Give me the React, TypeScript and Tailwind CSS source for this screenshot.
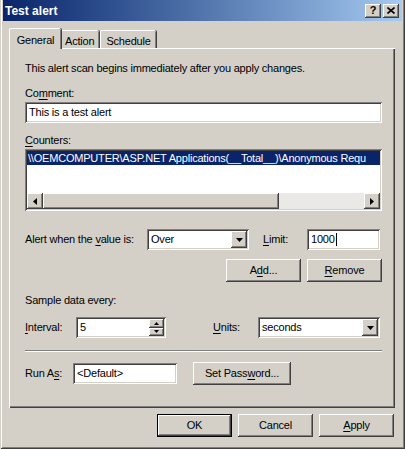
import React from "react";

const RAISED =
  "shadow-[inset_-1px_-1px_#404040,inset_1px_1px_#ffffff,inset_-2px_-2px_#808080,inset_2px_2px_#d4d0c8]";
const SUNKEN =
  "shadow-[inset_1px_1px_#808080,inset_-1px_-1px_#ffffff,inset_2px_2px_#404040,inset_-2px_-2px_#d4d0c8]";

function U({ children }: { children: React.ReactNode }) {
  return <span className="underline underline-offset-[2px]">{children}</span>;
}

function Btn({
  children,
  className = "",
  isDefault = false,
}: {
  children: React.ReactNode;
  className?: string;
  isDefault?: boolean;
}) {
  if (isDefault) {
    return (
      <div className={`flex h-[23px] border border-black ${className}`}>
        <div className={`flex flex-1 items-center justify-center bg-[#d4d0c8] ${RAISED}`}>{children}</div>
      </div>
    );
  }
  return (
    <div className={`flex h-[23px] items-center justify-center bg-[#d4d0c8] ${RAISED} ${className}`}>
      {children}
    </div>
  );
}

function DownArrow() {
  return (
    <svg width="7" height="4" viewBox="0 0 7 4">
      <path d="M0 0h7L3.5 4z" fill="#000" />
    </svg>
  );
}

function Select({ value, className = "" }: { value: string; className?: string }) {
  return (
    <div className={`flex h-[21px] items-center bg-white p-[2px] ${SUNKEN} ${className}`}>
      <span className="flex-1 pl-[2px] leading-[13px]">{value}</span>
      <div className={`flex h-[17px] w-[16px] items-center justify-center bg-[#d4d0c8] ${RAISED}`}>
        <DownArrow />
      </div>
    </div>
  );
}

function TextBox({ value, className = "", cursor = false }: { value: string; className?: string; cursor?: boolean }) {
  return (
    <div className={`flex h-[21px] items-center bg-white px-[4px] ${SUNKEN} ${className}`}>
      <span className="leading-[13px]">{value}</span>
      {cursor && <span className="ml-[1px] h-[13px] w-[1px] bg-black" />}
    </div>
  );
}

function Tab({ label, active = false }: { label: string; active?: boolean }) {
  if (active) {
    return (
      <div className="relative z-10 -mr-[2px] flex h-[21px] w-[52px] items-start justify-center rounded-t-[2px] border-l border-t border-white bg-[#d4d0c8] pt-[3px] shadow-[inset_-1px_0_#808080,1px_0_#404040]">
        {label}
      </div>
    );
  }
  return (
    <div className="mt-[2px] flex h-[18px] items-start justify-center rounded-t-[2px] border-l border-t border-white bg-[#d4d0c8] px-[5px] pt-[2px] shadow-[inset_-1px_0_#808080,1px_0_#404040]">
      {label}
    </div>
  );
}

export default function App() {
  return (
    <div className="flex h-[449px] w-[405px] flex-col bg-[#d4d0c8] px-[3px] pb-[3px] font-['Liberation_Sans',Arial,sans-serif] text-[11px] tracking-[-0.2px] text-black shadow-[inset_1px_0_#d4d0c8,inset_-1px_-1px_#404040,inset_2px_0_#ffffff,inset_-2px_-2px_#808080]">
      {/* title bar */}
      <div className="flex h-[21px] items-center justify-between bg-gradient-to-r from-[#0a246a] to-[#a6caf0] pl-[2px] pr-[3px]">
        <span className="text-[12px] font-bold tracking-normal text-white">Test alert</span>
        <div className="flex items-center gap-[2px]">
          <div className={`flex h-[14px] w-[16px] items-center justify-center bg-[#d4d0c8] text-[11px] font-bold leading-none ${RAISED}`}>
            ?
          </div>
          <div className={`flex h-[14px] w-[16px] items-center justify-center bg-[#d4d0c8] ${RAISED}`}>
            <svg width="8" height="7" viewBox="0 0 8 7">
              <path d="M0.5 0.5l7 6M7.5 0.5l-7 6" stroke="#000" strokeWidth="1.6" />
            </svg>
          </div>
        </div>
      </div>

      {/* tabs */}
      <div className="mt-[7px] flex pl-[6px] pr-[7px]">
        <Tab label="General" active />
        <Tab label="Action" />
        <div className="w-[1px]" />
        <Tab label="Schedule" />
      </div>

      {/* panel */}
      <div className="-mt-[1px] ml-[6px] mr-[7px] flex h-[360px] flex-col border-l border-t border-white pl-[15px] pr-[13px] pt-[13px] shadow-[inset_-1px_-1px_#404040,inset_-2px_-2px_#808080]">
        <p className="leading-[13px]">This alert scan begins immediately after you apply changes.</p>

        <p className="mt-[12px] leading-[13px]">
          Co<U>m</U>ment:
        </p>
        <TextBox value="This is a test alert" className="mt-[2px]" />

        <p className="mt-[11px] leading-[13px]">
          <U>C</U>ounters:
        </p>
        <div className={`mt-[2px] flex h-[62px] flex-col bg-white p-[2px] ${SUNKEN}`}>
          <div className="h-[14px] overflow-hidden whitespace-nowrap bg-[#0a246a] pl-[1px] leading-[14px] text-white">
            \\OEMCOMPUTER\ASP.NET Applications(__Total__)\Anonymous Requ
          </div>
          <div className="flex-1" />
          <div className="flex h-[16px]">
            <div className={`flex w-[16px] items-center justify-center bg-[#d4d0c8] ${RAISED}`}>
              <svg width="4" height="7" viewBox="0 0 4 7">
                <path d="M4 0v7L0 3.5z" fill="#000" />
              </svg>
            </div>
            <div className={`w-[236px] bg-[#d4d0c8] ${RAISED}`} />
            <div className="flex-1 bg-[#ebe9e5]" />
            <div className={`flex w-[16px] items-center justify-center bg-[#d4d0c8] ${RAISED}`}>
              <svg width="4" height="7" viewBox="0 0 4 7">
                <path d="M0 0v7L4 3.5z" fill="#000" />
              </svg>
            </div>
          </div>
        </div>

        <div className="mt-[18px] flex items-center">
          <span className="w-[122px] leading-[13px]">
            Alert when the <U>v</U>alue is:
          </span>
          <Select value="Over" className="w-[102px]" />
          <span className="ml-[14px] w-[44px] leading-[13px]">
            <U>L</U>imit:
          </span>
          <TextBox value="1000" className="w-[73px]" cursor />
        </div>

        <div className="mt-[9px] flex justify-end gap-[6px]">
          <Btn className="w-[75px]">
            A<U>d</U>d...
          </Btn>
          <Btn className="w-[75px]">
            <U>R</U>emove
          </Btn>
        </div>

        <p className="mt-[12px] leading-[13px]">Sample data every:</p>

        <div className="mt-[10px] flex items-center">
          <span className="w-[51px] leading-[13px]">
            <U>I</U>nterval:
          </span>
          <div className={`flex h-[21px] w-[90px] items-center bg-white p-[2px] ${SUNKEN}`}>
            <span className="flex-1 pl-[2px] leading-[13px]">5</span>
            <div className="flex h-[17px] w-[15px] flex-col">
              <div className={`flex flex-1 items-center justify-center bg-[#d4d0c8] ${RAISED}`}>
                <svg width="5" height="3" viewBox="0 0 5 3">
                  <path d="M0 3h5L2.5 0z" fill="#000" />
                </svg>
              </div>
              <div className={`flex flex-1 items-center justify-center bg-[#d4d0c8] ${RAISED}`}>
                <svg width="5" height="3" viewBox="0 0 5 3">
                  <path d="M0 0h5L2.5 3z" fill="#000" />
                </svg>
              </div>
            </div>
          </div>
          <span className="ml-[47px] w-[45px] leading-[13px]">
            <U>U</U>nits:
          </span>
          <Select value="seconds" className="w-[122px]" />
        </div>

        <div className="mt-[12px] h-[2px] border-b border-t border-b-white border-t-[#808080]" />

        <div className="mt-[10px] flex items-center">
          <span className="w-[48px] leading-[13px]">
            Run A<U>s</U>:
          </span>
          <TextBox value="<Default>" className="w-[104px]" />
          <Btn className="ml-[16px] w-[98px]">
            Set Pass<U>w</U>ord...
          </Btn>
        </div>
      </div>

      {/* dialog buttons */}
      <div className="mt-[6px] flex justify-end gap-[6px] pr-[8px]">
        <Btn className="w-[75px]" isDefault>
          OK
        </Btn>
        <Btn className="w-[75px]">Cancel</Btn>
        <Btn className="w-[75px]">
          <U>A</U>pply
        </Btn>
      </div>
    </div>
  );
}
